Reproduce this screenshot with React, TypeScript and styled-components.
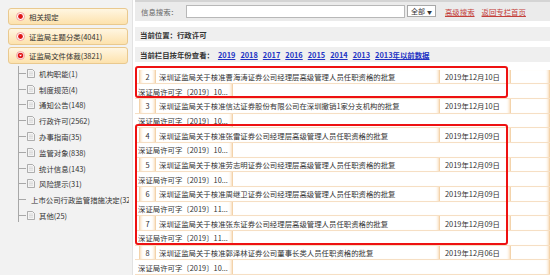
import styled, { createGlobalStyle } from "styled-components";

const GlobalStyle = createGlobalStyle`
  html, body {
    margin: 0;
    padding: 0;
    background: #fff;
    font-family: "Noto Sans CJK SC", "Noto Sans", sans-serif;
    font-size: 7.4px;
    color: #333;
  }
`;

const Page = styled.div`
  display: flex;
  width: 550px;
  height: 275px;
  overflow: hidden;
`;

const Sidebar = styled.div`
  width: 132px;
  flex-shrink: 0;
  background: #f2f2f2;
  border-right: 1px solid #e2e2e2;
  padding-top: 8px;
  overflow: hidden;
`;

const MenuButton = styled.div`
  margin: 0 0 2.5px 8px;
  width: 120px;
  height: 17px;
  box-sizing: border-box;
  border: 1px solid #e9c98f;
  border-radius: 3px;
  background: linear-gradient(#fff6e2, #fde2ad);
  display: flex;
  align-items: center;
  padding-left: 7px;
  gap: 4px;
  color: #333;
  white-space: nowrap;
`;

const Tree = styled.div`
  margin-left: 18px;
  margin-top: -1px;
  width: 110px;
  height: 156px;
  border-left: 1px solid #a8a8a8;
  overflow: hidden;
`;

const TreeItem = styled.div`
  display: flex;
  align-items: center;
  height: 15.8px;
  white-space: nowrap;
  &::before {
    content: "";
    flex-shrink: 0;
    width: 7px;
    border-top: 1px solid #a8a8a8;
    margin-right: 1px;
  }
`;

const TreeLabel = styled.span`
  margin-left: 4px;
`;

const Main = styled.div`
  flex: 1;
  padding-left: 2px;
  display: flex;
  flex-direction: column;
`;

const SearchBar = styled.div`
  height: 21px;
  box-sizing: border-box;
  background: #ebebeb;
  border-top: 2px solid #d4d4d4;
  display: flex;
  align-items: center;
  padding-left: 6px;
  color: #666;
`;

const SearchInput = styled.div`
  width: 217px;
  height: 11px;
  margin-left: 8px;
  background: #fff;
  border: 1px solid #b8b8b8;
`;

const SelectBox = styled.div`
  margin-left: 2px;
  width: 29px;
  height: 12px;
  box-sizing: border-box;
  background: #fff;
  border: 1px solid #a8a8a8;
  display: flex;
  align-items: center;
  justify-content: space-between;
  padding: 0 3px;
  color: #333;
  font-size: 7px;
`;

const Caret = styled.span`
  font-size: 5px;
`;

const TopLink = styled.a<{ $gap: number }>`
  color: #c4403a;
  text-decoration: underline;
  margin-left: ${(p) => p.$gap}px;
`;

const InfoBar = styled.div<{ $top: number }>`
  margin-top: ${(p) => p.$top}px;
  height: 14.5px;
  background: #efefef;
  display: flex;
  align-items: center;
  padding-left: 5px;
  font-weight: bold;
  color: #333;
`;

const YearList = styled.span`
  margin-left: 4px;
  display: flex;
`;

const YearLink = styled.a`
  color: #2233c4;
  font-weight: bold;
  text-decoration: underline;
  margin-right: 5px;
`;

const Table = styled.div`
  margin-top: 8px;
  display: flex;
  flex-direction: column;
`;

const Group = styled.div<{ $marked: boolean }>`
  position: relative;
  &::after {
    content: "";
    display: ${(p) => (p.$marked ? "block" : "none")};
    position: absolute;
    left: 0;
    right: 42px;
    top: -4px;
    bottom: 1px;
    border: 2px solid #ee1111;
    border-radius: 3px;
    pointer-events: none;
  }
`;

const Line = styled.div`
  display: flex;
  height: 14.68px;
  box-sizing: border-box;
  border-bottom: 1px solid #f6dfc4;
`;

const Cell = styled.div<{ $w?: number; $pad?: number }>`
  ${(p) => (p.$w ? `width: ${p.$w}px; flex-shrink: 0;` : "flex: 1;")}
  box-sizing: border-box;
  display: flex;
  align-items: center;
  padding-left: ${(p) => p.$pad ?? 3}px;
  border-right: 1px solid #f3d3ab;
  box-shadow: inset -3px 0 3px -2px #f8d9b3;
  white-space: nowrap;
  overflow: hidden;
  color: #333;
`;

const Spacer = styled.div<{ $w: number }>`
  width: ${(p) => p.$w}px;
  flex-shrink: 0;
`;

const NumCell = styled(Cell)`
  justify-content: center;
  padding-left: 0;
  border-left: 1px solid #f3d3ab;
  box-shadow: inset -3px 0 3px -2px #f8d9b3, inset 3px 0 3px -2px #f8d9b3;
`;

function Bullet({ open }: { open?: boolean }) {
  return (
    <svg width="9" height="9" viewBox="0 0 9 9">
      <circle cx="4.5" cy="4.5" r="4" fill="#fff" stroke="#f08a8a" strokeWidth="0.8" />
      {open ? (
        <>
          <circle cx="4.5" cy="4.5" r="2.8" fill="#e01818" />
          <path d="M3 3.8 L6 3.8 L4.5 5.6 Z" fill="#fff" />
        </>
      ) : (
        <circle cx="4.5" cy="4.5" r="2.4" fill="#e01818" />
      )}
    </svg>
  );
}

function DocIcon() {
  return (
    <svg width="8" height="9" viewBox="0 0 8 9">
      <path d="M0.5 0.5 H5.5 L7.5 2.5 V8.5 H0.5 Z" fill="#f4f4f4" stroke="#9a9a9a" strokeWidth="0.8" />
      <path d="M2 3 H6 M2 4.6 H6 M2 6.2 H6" stroke="#c8c8c8" strokeWidth="0.6" />
    </svg>
  );
}

const menus = [
  { label: "相关规定", open: false },
  { label: "证监局主题分类(4041)", open: false },
  { label: "证监局文件体裁(3821)", open: true },
];

const treeItems = [
  "机构职能(1)",
  "制度规范(4)",
  "通知公告(148)",
  "行政许可(2562)",
  "办事指南(35)",
  "监管对象(838)",
  "统计信息(143)",
  "风险提示(31)",
  "上市公司行政监管措施决定(32)",
  "其他(25)",
];

const years = ["2019", "2018", "2017", "2016", "2015", "2014", "2013", "2013年以前数据"];

type Row = { no: number; title: string; date: string; code: string };

const rows: Row[] = [
  { no: 2, title: "深圳证监局关于核准曹海涛证券公司经理层高级管理人员任职资格的批复", date: "2019年12月10日", code: "深证局许可字〔2019〕10..." },
  { no: 3, title: "深圳证监局关于核准信达证券股份有限公司在深圳撤销1家分支机构的批复", date: "2019年12月10日", code: "深证局许可字〔2019〕10..." },
  { no: 4, title: "深圳证监局关于核准张雷证券公司经理层高级管理人员任职资格的批复", date: "2019年12月09日", code: "深证局许可字〔2019〕10..." },
  { no: 5, title: "深圳证监局关于核准劳志明证券公司经理层高级管理人员任职资格的批复", date: "2019年12月09日", code: "深证局许可字〔2019〕10..." },
  { no: 6, title: "深圳证监局关于核准周继卫证券公司经理层高级管理人员任职资格的批复", date: "2019年12月09日", code: "深证局许可字〔2019〕11..." },
  { no: 7, title: "深圳证监局关于核准张东证券公司经理层高级管理人员任职资格的批复", date: "2019年12月09日", code: "深证局许可字〔2019〕11..." },
  { no: 8, title: "深圳证监局关于核准郭泽林证券公司董事长类人员任职资格的批复", date: "2019年12月06日", code: "深证局许可字〔2019〕10..." },
];

const groups: { marked: boolean; rows: Row[] }[] = [
  { marked: true, rows: rows.slice(0, 1) },
  { marked: false, rows: rows.slice(1, 2) },
  { marked: true, rows: rows.slice(2, 6) },
  { marked: false, rows: rows.slice(6) },
];

function RecordRow({ row }: { row: Row }) {
  return (
    <>
      <Line>
        <Spacer $w={4} />
        <NumCell $w={17}>{row.no}</NumCell>
        <Cell $w={284}>{row.title}</Cell>
        <Cell $w={71} $pad={5}>{row.date}</Cell>
        <Cell />
      </Line>
      <Line>
        <Cell $w={98} $pad={3}>{row.code}</Cell>
        <Cell />
      </Line>
    </>
  );
}

export default function App() {
  return (
    <>
      <GlobalStyle />
      <Page>
        <Sidebar>
          {menus.map((m) => (
            <MenuButton key={m.label}>
              <Bullet open={m.open} />
              {m.label}
            </MenuButton>
          ))}
          <Tree>
            {treeItems.map((t) => (
              <TreeItem key={t}>
                <DocIcon />
                <TreeLabel>{t}</TreeLabel>
              </TreeItem>
            ))}
          </Tree>
        </Sidebar>
        <Main>
          <SearchBar>
            信息搜索：
            <SearchInput />
            <SelectBox>
              全部<Caret>▼</Caret>
            </SelectBox>
            <TopLink $gap={9}>高级搜索</TopLink>
            <TopLink $gap={7}>返回专栏首页</TopLink>
          </SearchBar>
          <InfoBar $top={6}>当前位置：行政许可</InfoBar>
          <InfoBar $top={6}>
            当前栏目按年份查看：
            <YearList>
              {years.map((y) => (
                <YearLink key={y}>{y}</YearLink>
              ))}
            </YearList>
          </InfoBar>
          <Table>
            {groups.map((g, i) => (
              <Group key={i} $marked={g.marked}>
                {g.rows.map((r) => (
                  <RecordRow key={r.no} row={r} />
                ))}
              </Group>
            ))}
          </Table>
        </Main>
      </Page>
    </>
  );
}
